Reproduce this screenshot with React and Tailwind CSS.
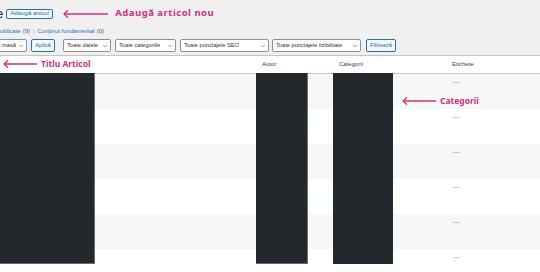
import { ChevronDown } from "lucide-react";

const PINK = "text-[#d0307c]";

function Select({ label, width, className = "" }) {
  return (
    <div
      className={`h-[13px] shrink-0 flex items-center justify-between gap-[1px] bg-white border border-[#8c8f94] rounded-[2px] pl-[3px] pr-[2px] text-[5.7px] text-[#2c3338] ${width} ${className}`}
    >
      <span className="min-w-0 overflow-hidden whitespace-nowrap">{label}</span>
      <ChevronDown size={6} strokeWidth={2.5} className="shrink-0 text-[#50575e]" />
    </div>
  );
}

function Btn({ children, className = "" }) {
  return (
    <div
      className={`h-[13px] shrink-0 flex items-center justify-center bg-[#f6f7f7] border border-[#2271b1] rounded-[2px] text-[5.7px] text-[#2271b1] ${className}`}
    >
      {children}
    </div>
  );
}

function LeftArrow({ width }) {
  return (
    <svg width={width} height="8" viewBox={`0 0 ${width} 8`} className="shrink-0 block">
      <path d={`M1 4 H${width}`} stroke="#d0307c" strokeWidth="1.3" />
      <path d="M4.5 0.8 L1 4 L4.5 7.2" fill="none" stroke="#d0307c" strokeWidth="1.3" strokeLinecap="round" strokeLinejoin="round" />
    </svg>
  );
}

const ROWS = [0, 1, 2, 3, 4, 5];

export default function App() {
  return (
    <div className="relative w-[540px] h-[272px] overflow-hidden bg-[#f0f0f1] font-['Liberation_Sans',sans-serif]">
      {/* Page title + add button */}
      <div className="h-[26px] flex items-center pt-[1px]">
        <span className="-ml-[4px] text-[13px] leading-none text-[#1d2327] -mt-[1px]">e</span>
        <div className="ml-[3px] h-[10px] w-[47px] flex items-center justify-center border border-[#2271b1] rounded-[2px] bg-[#f6f7f7] text-[6px] text-[#2271b1] whitespace-nowrap">
          Adaugă articol
        </div>
        <div className="ml-[10px]">
          <LeftArrow width={45} />
        </div>
        <span className={`ml-[7px] text-[9.5px] tracking-[0.5px] font-bold ${PINK} whitespace-nowrap font-['Noto_Sans',sans-serif]`}>
          Adaugă articol nou
        </span>
      </div>

      {/* Status links */}
      <div className="h-[10px] flex items-center text-[6px] whitespace-nowrap">
        <span className="text-[#2271b1]">ublicate</span>
        <span className="ml-[2px] text-[#50575e]">(9)</span>
        <span className="mx-[3px] text-[#a7aaad]">|</span>
        <span className="text-[#2271b1]">Conținut fundamental</span>
        <span className="ml-[2px] text-[#50575e]">(0)</span>
      </div>

      {/* Filters */}
      <div className="mt-[3px] h-[13px] flex items-center">
        <Select label="Acțiuni în masă" width="w-[54px]" className="-ml-[27px]" />
        <Btn className="ml-[4px] w-[24px]">Aplică</Btn>
        <Select label="Toate datele" width="w-[48px]" className="ml-[8px]" />
        <Select label="Toate categoriile" width="w-[61px]" className="ml-[4px]" />
        <Select label="Toate punctajele SEO" width="w-[89px]" className="ml-[4px]" />
        <Select label="Toate punctajele lizibilitate" width="w-[89px]" className="ml-[3px]" />
        <Btn className="ml-[5px] w-[30px]">Filtrează</Btn>
      </div>

      {/* Table */}
      <div className="mt-[3px] border-t border-[#c3c4c7] bg-white">
        <div className="h-[18px] grid grid-cols-[256px_77px_113px_94px] items-center border-b border-[#c3c4c7] text-[6px] text-[#3c434a]">
          <div />
          <div className="pl-[6px]">Autor</div>
          <div className="pl-[6px]">Categorii</div>
          <div className="pl-[6px]">Etichete</div>
        </div>
        {ROWS.map((r) => (
          <div
            key={r}
            className={`h-[35px] grid grid-cols-[256px_77px_113px_94px] ${r % 2 === 0 ? "bg-[#f6f7f7]" : "bg-white"}`}
          >
            <div />
            <div />
            <div />
            <div className="pl-[7px] pt-[3px] text-[7px] text-[#a7aaad]">—</div>
          </div>
        ))}
      </div>

      {/* Redaction boxes */}
      <div className="absolute left-0 top-[73px] w-[95px] h-[191px] bg-[#23282c] border-r border-b border-[#6b6f73]" />
      <div className="absolute left-[256px] top-[73px] w-[52px] h-[191px] bg-[#23282c] border-r border-b border-[#6b6f73]" />
      <div className="absolute left-[333px] top-[73px] w-[60px] h-[191px] bg-[#23282c]" />

      {/* Annotations */}
      <div className="absolute left-[3px] top-[58px] flex items-center font-['Noto_Sans',sans-serif]">
        <LeftArrow width={34} />
        <span className={`ml-[4px] text-[8.5px] font-bold ${PINK} whitespace-nowrap`}>Titlu Articol</span>
      </div>
      <div className="absolute left-[402px] top-[95px] flex items-center font-['Noto_Sans',sans-serif]">
        <LeftArrow width={34} />
        <span className={`ml-[4px] text-[8.5px] font-bold ${PINK} whitespace-nowrap`}>Categorii</span>
      </div>
    </div>
  );
}
